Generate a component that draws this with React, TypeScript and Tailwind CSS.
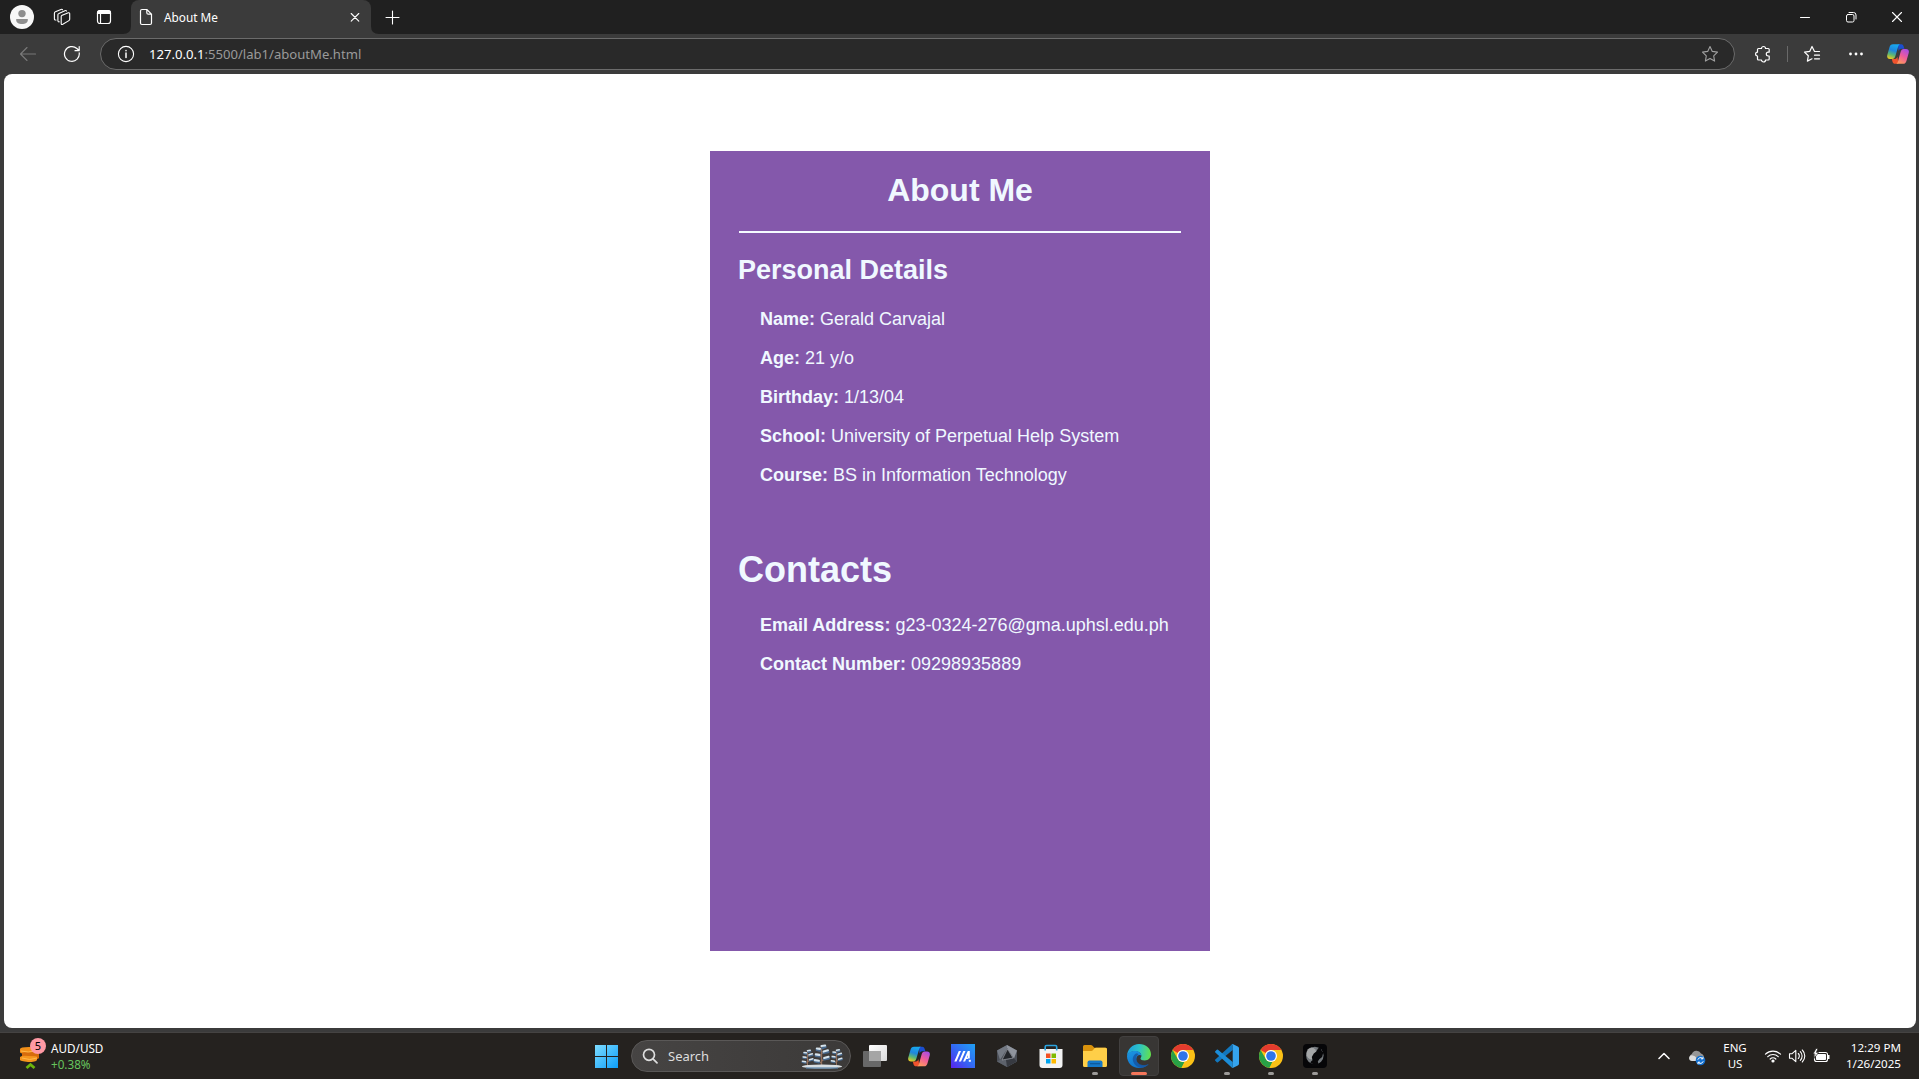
import React from "react";

const stroke = { fill: "none", stroke: "currentColor", strokeLinecap: "round", strokeLinejoin: "round" } as const;

function Copilot({ className, id }: { className: string; id: string }) {
  return (
    <svg viewBox="0 0 22 20" className={className}>
      <defs>
        <linearGradient id={id + "a"} x1="0.5" y1="0" x2="0.2" y2="1">
          <stop offset="0" stopColor="#18a8ee" />
          <stop offset="0.4" stopColor="#1f86dd" />
          <stop offset="0.7" stopColor="#5db873" />
          <stop offset="1" stopColor="#f5cb1b" />
        </linearGradient>
        <linearGradient id={id + "b"} x1="0.8" y1="0" x2="0.3" y2="1">
          <stop offset="0" stopColor="#a64ce8" />
          <stop offset="0.5" stopColor="#ee5b9b" />
          <stop offset="1" stopColor="#ff9a5c" />
        </linearGradient>
      </defs>
      <path d="M11 .2h3.2c1.4 0 2 .8 2.4 2l.8 2.6h-3.2c-1.500 0-2.200 1-2.700 2.500z" fill="#1b4ed0" />
      <path d="M4.800 15H8c1.300 0 2-1 2.400-2.400l1 7.200H8c-1.300 0-2-.7-2.400-1.800z" fill="#f0532d" />
      <path d="M6 .2h7.200c-1.100.3-1.700 1.200-2.100 2.500L8.400 12c-.5 1.900-1.500 3-3.200 3H3C.6 15-.3 13.400.3 11L2.500 3.300C3 1.300 4 .2 6 .2z" fill={`url(#${id}a)`} />
      <path d="M16 19.800H9c1.100-.3 1.600-1.200 2-2.500L13.600 8c.5-1.900 1.500-3.100 3.200-3.100H19c2.400 0 3.300 1.700 2.700 4L19.500 16.700c-.5 2-1.500 3.100-3.500 3.100z" fill={`url(#${id}b)`} />
    </svg>
  );
}

function Chrome() {
  return (
    <svg viewBox="0 0 24 24" className="size-6">
      <circle cx="12" cy="12" r="12" fill="#fbc116" />
      <path d="M12 0a12 12 0 0 1 10.390 6H12a6 6 0 0 0-5.200 3L1.610 6A12 12 0 0 1 12 0z" fill="#e33b2e" />
      <path d="M1.610 6 6.800 15A6 6 0 0 0 12 18l1.500-.2L10.600 23.900A12 12 0 0 1 1.610 6z" fill="#28a146" />
      <path d="M17.200 15 12 24a12 12 0 0 1-1.600-.1L14 17.600z" fill="#fbc116" />
      <circle cx="12" cy="12" r="6" fill="#fff" />
      <circle cx="12" cy="12" r="4.800" fill="#2f74ea" />
    </svg>
  );
}

function Edge() {
  return (
    <svg viewBox="0 0 24 24" className="size-6">
      <defs>
        <linearGradient id="eg1" x1="0" y1="0.3" x2="1" y2="0.4">
          <stop offset="0" stopColor="#1c9ee0" />
          <stop offset="0.5" stopColor="#2cc3c8" />
          <stop offset="1" stopColor="#62e04e" />
        </linearGradient>
        <linearGradient id="eg2" x1="0" y1="0" x2="0.5" y2="1">
          <stop offset="0" stopColor="#1b96e2" />
          <stop offset="1" stopColor="#1173cc" />
        </linearGradient>
      </defs>
      <path d="M0 12C.2 5 5.500 0 12 0c7 0 12 4.700 12 10.300 0 3.700-2.800 6.200-6.200 6.200-2.800 0-4.300-1-4.300-2 0-.6.900-1 .9-2.700 0-2.400-2.400-4.600-6-4.600C4 7.200.8 9.300 0 12z" fill="url(#eg1)" />
      <path d="M0 12c.8-3 4-4.900 8.200-4.900 3.800 0 6.200 2.300 6.200 4.800-.6-1.200-2.700-1.300-4 0-3 4 .5 9.600 6 9.600 2.400 0 3.500-.6 5.300-1.600C19.500 22.500 16 24 12 24 5 24 0 18.500 0 12z" fill="url(#eg2)" />
      <path d="M10 9.200c-2.500.6-4.500 3.500-4.200 6.800.6 4 4.200 7.500 8.500 7.800 3-.4 5.800-1.900 7.400-3.900-6 3-12.600-.6-12.600-5.500 0-2 1.200-3 2.300-3.700-.4-.7-.8-1.200-1.400-1.500z" fill="#15519e" opacity=".75" />
    </svg>
  );
}

function SearchTrees() {
  const tree = (x: number, y: number, s: number) => (
    <g transform={`translate(${x} ${y}) scale(${s})`}>
      <path d="M0 21V2M0 18l-4.500-3M0 16l4.500-3.500M0 12l-4-3M0 9l4-3M0 6l-2.500-3" stroke="#93705c" strokeWidth="1.300" fill="none" />
      <path d="M-6.500 16.200l4 .8M2.500 14.200l4.500-1M-5.500 10.800l3.500.5M2 8l4.500-.8M-4.500 5l3 .8M.8 3.500l3-1.200" stroke="#48698d" strokeWidth="2.400" strokeLinecap="round" />
      <path d="M-6.500 15l4 .6M2.500 13l4.300-1.200M-5.500 9.500l3.500.5M2 6.800l4.200-1.200M-4.500 3.800l3 .4M0 1.500l3.500-.5" stroke="#d5e3ec" strokeWidth="2" strokeLinecap="round" />
    </g>
  );
  return (
    <svg viewBox="0 0 42 26" className="h-[26px] w-[42px]">
      {tree(6.500, 6.500, 0.78)}
      {tree(35.500, 6, 0.78)}
      {tree(20.500, 1.500, 1.040)}
      <ellipse cx="21" cy="23.500" rx="20" ry="2" fill="#d8dee2" />
      <path d="M5 25h32" stroke="#5a83aa" strokeWidth="1.200" />
    </svg>
  );
}

function TitleBar() {
  return (
    <div className="flex h-[34px] items-center bg-[#202020] text-white">
      <svg viewBox="0 0 24 24" className="ml-[10px] size-6">
        <circle cx="12" cy="12" r="12" fill="#f7f7f7" />
        <circle cx="12" cy="8.600" r="3.700" fill="#8e8e8e" />
        <path d="M6.200 14h11.600v1.200c0 2.300-2.500 3.900-5.800 3.900s-5.800-1.600-5.800-3.900z" fill="#8e8e8e" />
      </svg>
      <svg viewBox="0 0 18 18" className="ml-[19px] size-[18px]" {...stroke} strokeWidth="1.100">
        <path d="M9.200 7.200 15.300 4.800q1.400-.4 1.400 1v5.500q0 .9-.8 1.300l-6.100 3.700q-1.600.8-1.600-.8V8.600q0-1 1-1.400z" />
        <path d="M6.300 13.800q-1.400.3-1.400-1.200V6.800q0-1 1-1.400l6-2.700q1.200-.4 1.600.4" />
        <path d="M3 12q-1.600.3-1.600-1.200V5.200q0-1 1-1.400l5.600-2.400q1.200-.4 1.500.3" />
      </svg>
      <svg viewBox="0 0 16 16" className="ml-[25px] size-4" {...stroke} strokeWidth="1.200">
        <rect x="1.500" y="1.500" width="13" height="13" rx="2.500" />
        <path d="M1.500 4.500V4A2.500 2.500 0 0 1 4 1.500h8A2.500 2.500 0 0 1 14.500 4v.5z" fill="currentColor" />
        <path d="M4.500 5v9.500" />
      </svg>
      <div className="relative ml-[19px] flex h-[34px] w-[240px] items-center rounded-t-[8px] bg-[#3b3b3b]">
        <svg viewBox="0 0 256 8" className="absolute bottom-0 left-[-8px] h-2 w-[256px]" fill="#3b3b3b">
          <path d="M0 8h8V0q0 8-8 8zM256 8h-8V0q0 8 8 8z" />
        </svg>
        <svg viewBox="0 0 14 18" className="ml-[8px] h-[18px] w-[14px]" {...stroke} strokeWidth="1.200">
          <path d="M3 1.500h4.800l4.700 4.700v8.800q0 1.500-1.500 1.500H3q-1.500 0-1.500-1.500V3Q1.500 1.500 3 1.500zM7.800 1.500v3.200q0 1.500 1.500 1.500h3.200" />
        </svg>
        <span className="ml-[11px] w-[184px] pb-px text-[11.800px] leading-4">About Me</span>
        <svg viewBox="0 0 10 10" className="ml-[2px] size-[10px] shrink-0" {...stroke} strokeWidth="1.100">
          <path d="M1.200 1.500l7.600 7.600M8.800 1.500l-7.600 7.600" />
        </svg>
      </div>
      <svg viewBox="0 0 15 15" className="ml-[14px] size-[15px]" {...stroke} strokeWidth="1.100">
        <path d="M7.500 1v13M1 7.500h13" />
      </svg>
      <div className="mr-[16px] ml-auto flex items-center gap-[34px]">
        <svg viewBox="0 0 12 12" className="size-3" {...stroke} strokeWidth="1">
          <path d="M1.500 6.500h9" />
        </svg>
        <svg viewBox="0 0 12 12" className="size-3" {...stroke} strokeWidth="1">
          <rect x="1.500" y="3.500" width="7.500" height="7.500" rx="1.500" />
          <path d="M4 1.500h4.500q2.500 0 2.500 2.500v4" />
        </svg>
        <svg viewBox="0 0 12 12" className="size-3" {...stroke} strokeWidth="1.100">
          <path d="M1.500 1.500l9 9M10.500 1.500l-9 9" />
        </svg>
      </div>
    </div>
  );
}

function Toolbar() {
  return (
    <div className="flex h-[40px] items-center bg-[#3b3b3b] text-white">
      <svg viewBox="0 0 18 18" className="ml-[19px] size-[18px] text-[#797979]" {...stroke} strokeWidth="1.100">
        <path d="M16.500 9h-15M8 2.500 1.500 9 8 15.500" />
      </svg>
      <svg viewBox="0 0 18 18" className="ml-[26px] size-[18px]" {...stroke} strokeWidth="1.200">
        <path d="M16.200 7.800A7.400 7.400 0 1 1 13.900 3.500L16 5.500M16.200 1.500v4.200H12" />
      </svg>
      <div className="ml-[19px] flex h-8 w-[1635px] items-center rounded-full border border-[#6b6b6b] bg-[#292929]">
        <svg viewBox="0 0 18 18" className="ml-[16px] size-[18px]" {...stroke} strokeWidth="1.100">
          <circle cx="9" cy="9" r="7.600" />
          <path d="M9 8v4.500M9 5.500v.2" strokeWidth="1.500" />
        </svg>
        <span className="ml-[14px] text-[13.100px] leading-5 text-[#9a9a9a]">
          <span className="text-white">127.0.0.1</span>:5500/lab1/aboutMe.html
        </span>
        <svg viewBox="0 0 18 18" className="mr-[15px] ml-auto size-[18px] text-[#a0a0a0]" {...stroke} strokeWidth="1.100">
          <path d="M9 1.500l2.300 4.900 5.200.7-3.800 3.700.9 5.300L9 13.600l-4.600 2.500.9-5.300L1.500 7.100l5.200-.7z" />
        </svg>
      </div>
      <svg viewBox="0 0 18 18" className="ml-[19px] size-[18px]" {...stroke} strokeWidth="1.200">
        <path d="M4.500 3.500h3a2 2 0 0 1 4 0h2.700q1 0 1 1v2.700h-1a1.900 1.900 0 0 0 0 3.800h1v3q0 1-1 1h-2.700a2 2 0 0 1-4 0h-3q-1 0-1-1v-3a1.900 1.900 0 0 1 0-3.800V4.500q0-1 1-1z" />
      </svg>
      <div className="ml-[15px] h-4 w-px bg-[#696969]" />
      <svg viewBox="0 0 18 18" className="ml-[15px] size-[18px]" {...stroke} strokeWidth="1.200">
        <path d="M16.500 6.500h-5L9 1.500 6.700 6.400l-5.200.7 3.800 3.700-.9 5.300L9 13.800M11.500 10.200h5M11.500 13.800h5" />
      </svg>
      <svg viewBox="0 0 16 4" className="ml-[27px] h-1 w-4" fill="currentColor">
        <circle cx="2.500" cy="2" r="1.400" />
        <circle cx="8" cy="2" r="1.400" />
        <circle cx="13.500" cy="2" r="1.400" />
      </svg>
      <Copilot id="tb" className="ml-[23px] h-5 w-[22px]" />
    </div>
  );
}

function Row({ label, value }: { label: string; value: string }) {
  return (
    <p>
      <b>{label}:</b> {value}
    </p>
  );
}

function AboutCard() {
  return (
    <div className="h-[800px] w-[500px] bg-[#8458ab] px-[28px] pt-[21px] font-['Liberation_Sans',Arial,sans-serif] text-[#f0f8ff]">
      <h1 className="text-center text-[32px] leading-[36px] font-bold">About Me</h1>
      <div className="mx-px mt-[23px] h-[2px] bg-[#f5faff]" />
      <h2 className="mt-[21px] text-[27px] leading-[32px] font-bold">Personal Details</h2>
      <div className="mt-[23px] ml-[22px] flex flex-col gap-[18px] text-[18px] leading-[21px] whitespace-nowrap">
        <Row label="Name" value="Gerald Carvajal" />
        <Row label="Age" value="21 y/o" />
        <Row label="Birthday" value="1/13/04" />
        <Row label="School" value="University of Perpetual Help System" />
        <Row label="Course" value="BS in Information Technology" />
      </div>
      <h2 className="mt-[63px] text-[36px] leading-[42px] font-bold">Contacts</h2>
      <div className="mt-[24px] ml-[22px] flex flex-col gap-[18px] text-[18px] leading-[21px] whitespace-nowrap">
        <Row label="Email Address" value="g23-0324-276@gma.uphsl.edu.ph" />
        <Row label="Contact Number" value="09298935889" />
      </div>
    </div>
  );
}

function TaskButton({ children, running, active }: { children: React.ReactNode; running?: boolean; active?: boolean }) {
  return (
    <div className="relative flex h-[46px] w-11 items-center justify-center">
      {active && <div className="absolute inset-x-[2px] inset-y-[3px] rounded-[4px] border border-[#42403f] bg-[#383634]" />}
      <div className="relative">{children}</div>
      {running && <div className="absolute bottom-[4px] h-[3px] w-[6px] rounded-full bg-[#9c9a98]" />}
      {active && <div className="absolute bottom-[4px] h-[3px] w-4 rounded-full bg-[#f4765a]" />}
    </div>
  );
}

function Taskbar() {
  return (
    <div className="relative flex h-[46px] items-center bg-[#25221f] text-white">
      <div className="relative ml-[18px] h-[30px] w-[30px]">
        <svg viewBox="0 0 30 30" className="size-[30px]">
          <path d="M2 8q0-2 9-2t9 2v3q0 2-9 2t-9-2z" fill="#f39019" />
          <path d="M4 12q0-1 9-1t8 2v4q-1 2-9 1t-8-2z" fill="#d76c0c" />
          <path d="M2 16q2-2 9-1 8 0 8 1v3q-1 2-9 2-8-1-8-2z" fill="#f5951d" />
          <path d="M3 10q7 2 15 0M4 17q8 3 15 0" stroke="#ffb94b" strokeWidth="1" fill="none" />
          <path d="M8.500 27l4-3.500 4 3.500" fill="none" stroke="#6db50d" strokeWidth="2.800" />
        </svg>
        <div className="absolute top-[-3px] left-[12px] flex size-4 items-center justify-center rounded-full bg-[#ff99a4] text-[11px] leading-4 text-black">5</div>
      </div>
      <div className="ml-[3px] pb-px text-[11.700px] leading-4">
        <div>AUD/USD</div>
        <div className="text-[#66c45e]">+0.38%</div>
      </div>
      <div className="absolute left-[584px] flex h-[46px] items-center">
        <div className="flex w-11 justify-center">
          <svg viewBox="0 0 23 23" className="size-[23px]">
            <defs>
              <linearGradient id="win" x1="0" y1="0" x2="1" y2="1">
                <stop offset="0" stopColor="#7ddcff" />
                <stop offset="1" stopColor="#0c9df8" />
              </linearGradient>
            </defs>
            <path d="M0 0h11v11H0zM12 0h11v11H12zM0 12h11v11H0zM12 12h11v11H12z" fill="url(#win)" />
          </svg>
        </div>
        <div className="ml-[3px] flex h-8 w-[220px] items-center rounded-full border border-[#5a5857] bg-linear-to-r from-[#464443] to-[#3c3a39]">
          <svg viewBox="0 0 16 16" className="ml-[10px] size-4 text-[#dedede]" {...stroke} strokeWidth="1.700">
            <circle cx="7" cy="6.800" r="5.500" />
            <path d="M11 10.800l4 4" />
          </svg>
          <span className="ml-[10px] text-[13px] leading-5 text-[#dddddd]">Search</span>
          <div className="mr-[7px] ml-auto">
            <SearchTrees />
          </div>
        </div>
        <div className="ml-[2px] flex">
          <TaskButton>
            <svg viewBox="0 0 24 22" className="h-[22px] w-6">
              <defs>
                <linearGradient id="tv" x1="0" y1="0" x2="1" y2="1">
                  <stop offset="0" stopColor="#fff" />
                  <stop offset="1" stopColor="#dadada" />
                </linearGradient>
              </defs>
              <rect y="6" width="18" height="16" rx="1" fill="#686868" />
              <rect x="6" width="18" height="16" rx="1" fill="url(#tv)" />
              <path d="M6 6h12v10H6z" fill="#a5a5a5" />
            </svg>
          </TaskButton>
          <TaskButton>
            <Copilot id="task" className="h-[21px] w-[22px]" />
          </TaskButton>
          <TaskButton>
            <svg viewBox="0 0 24 24" className="size-6">
              <defs>
                <linearGradient id="ma" x1="0" y1="1" x2="1" y2="0">
                  <stop offset="0" stopColor="#5a22ee" />
                  <stop offset="0.45" stopColor="#3564f4" />
                  <stop offset="1" stopColor="#1fa2f4" />
                </linearGradient>
              </defs>
              <path d="M0 0h24v24H0z" fill="url(#ma)" />
              <path d="M3.300 17.500 7.800 7h2.200L5.500 17.500zM7.800 17.500 12.300 7h2.200L10 17.500zM12 17.500 16.800 7h2v7.500h-1.900v-3.200l-1 2.200h1v1.500h-1.700l-1.100 2.500z" fill="#fff" />
              <path d="M17.800 15.800h2v2h-2z" fill="#fff" />
            </svg>
          </TaskButton>
          <TaskButton>
            <svg viewBox="0 0 22 24" className="h-6 w-[22px]">
              <path d="M11 1l10 5.500v11L11 23 1 17.500v-11z" fill="#4b4f57" />
              <path d="M11 1l10 5.500-3 8L11 4z" fill="#90959e" />
              <path d="M11 1v4L4 16l-3-9.500z" fill="#737983" />
              <path d="M1 17.500 4 16l14-1.500 3 3L11 23z" fill="#5d626b" />
              <path d="M11 23l-1-7 8-1.500 3 3z" fill="#373a41" />
              <path d="M11.500 5 17 14 6 16z" fill="#22252a" stroke="#a6aab1" strokeWidth=".6" />
            </svg>
          </TaskButton>
          <TaskButton>
            <svg viewBox="0 0 24 24" className="size-6">
              <path d="M6.200 7V2.800Q6.200 1.500 7.500 1.500h8.800q1.400 0 1.400 1.300V7" fill="none" stroke="#2ba4df" strokeWidth="1.600" />
              <path d="M.5 5h23v16q0 3-3 3h-17q-3 0-3-3z" fill="#f3f3f3" />
              <path d="M6.200 4.800V6.500M17.700 4.800V6.500" stroke="#2ba4df" strokeWidth="1.600" />
              <path d="M7 9.500h4.500V14H7z" fill="#f25022" />
              <path d="M12.500 9.500H17V14h-4.500z" fill="#7fba00" />
              <path d="M7 15h4.500v4.500H7z" fill="#00a4ef" />
              <path d="M12.500 15H17v4.500h-4.500z" fill="#ffb900" />
            </svg>
          </TaskButton>
          <TaskButton running>
            <svg viewBox="0 0 24 22" className="h-[22px] w-6">
              <path d="M0 1.500Q0 0 1.500 0h6.300q1 0 1.700.8l1.800 1.900H22.500q1.500 0 1.500 1.500V12H0z" fill="#d9920c" />
              <path d="M0 6h8.200q1 0 1.700-.8L11.500 3.300q.6-.6 1.500-.6h9.500q1.500 0 1.500 1.500v16.300q0 1.500-1.500 1.500h-21Q0 22 0 20.500z" fill="#ffcf48" />
              <path d="M4.500 22v-4.500Q4.500 15.500 6.500 15.500h11q2 0 2 2V22z" fill="#1478c8" />
              <path d="M7 18.700h10" stroke="#0e5797" strokeWidth="1.200" />
            </svg>
          </TaskButton>
          <TaskButton active>
            <Edge />
          </TaskButton>
          <TaskButton>
            <Chrome />
          </TaskButton>
          <TaskButton running>
            <svg viewBox="0 0 24 24" className="size-6">
              <path d="M17.700 0v6L3 18.200q-.7.500-1.200 0L.3 16.800q-.6-.6 0-1.200L17 .3z" fill="#1277bd" />
              <path d="M17.700 24v-6L3 5.800q-.7-.5-1.200 0L.3 7.200q-.6.600 0 1.200L17 23.700z" fill="#1c8dd8" />
              <path d="M17.700.1 22.800 2.500Q24 3 24 4.300v15.400q0 1.300-1.200 1.800l-5.100 2.400q-.8.300-1.400-.3 1.400.8 1.400-.7V1.100q0-1.500-1.400-.7.600-.6 1.400-.3z" fill="#35a4ee" />
            </svg>
          </TaskButton>
          <TaskButton running>
            <Chrome />
          </TaskButton>
          <TaskButton running>
            <svg viewBox="0 0 24 24" className="size-6">
              <rect width="24" height="24" rx="4" fill="#060608" />
              <circle cx="11.800" cy="11.500" r="8.800" fill="#74797d" />
              <ellipse cx="8.500" cy="9.500" rx="5" ry="6" fill="#b4b6b6" opacity=".75" />
              <path d="M15 4.500q1.500-1.500 2.800-.3l.7 2.300 1.800 2-1.200 4.500-2.800 2.300-1.500 2.200 1.500 4.500H8l1.500-2.500-2.500.5 1-2.500 1.500-1.300-.7-3.200 2-3.500 2.500-2z" fill="#08080a" />
            </svg>
          </TaskButton>
        </div>
      </div>
      <div className="mr-[18px] ml-auto flex items-center">
        <svg viewBox="0 0 12 8" className="h-2 w-3" {...stroke} strokeWidth="1.500">
          <path d="M1 6.500 6 1.500l5 5" />
        </svg>
        <svg viewBox="0 0 18 16" className="mt-[3px] ml-[18px] h-4 w-[18px]">
          <path d="M4 10.500a3.500 3.500 0 0 1-.2-6.500 5 5 0 0 1 9.200-.5 3.500 3.500 0 0 1 2.500 5L11 11z" fill="#969696" />
          <path d="M1 8a3 3 0 0 1 4.500-2.300Q8.500 6 9 11H4Q1.200 11 1 8z" fill="#dcdcdc" />
          <circle cx="12.500" cy="10.500" r="4.800" fill="#1370cf" />
          <path d="M9.800 9.700a3 3 0 0 1 5-1.200M15.200 11.300a3 3 0 0 1-5 1.200M15 6.800v2h-2M10 14.200v-2h2" stroke="#fff" strokeWidth="1" fill="none" />
        </svg>
        <div className="ml-[17px] w-6 text-center text-[11.500px] leading-4">
          <div>ENG</div>
          <div>US</div>
        </div>
        <svg viewBox="0 0 18 14" className="ml-[17px] h-[14px] w-[18px]" {...stroke} strokeWidth="1.200">
          <path d="M1.500 5.200a10.600 10.600 0 0 1 15 0M3.800 7.700a7.300 7.300 0 0 1 10.400 0M6.200 10a4 4 0 0 1 5.600 0" />
          <circle cx="9" cy="12" r="1" fill="currentColor" />
        </svg>
        <svg viewBox="0 0 18 16" className="ml-[6px] h-4 w-[18px]" {...stroke} strokeWidth="1.100">
          <path d="M1.500 5.800h2.300L7.800 2.300v11.400l-4-3.500H1.500zM10.300 5.500a3.500 3.500 0 0 1 0 5M12.300 3.700a6 6 0 0 1 0 8.600M14.300 2a8.500 8.500 0 0 1 0 12" />
        </svg>
        <svg viewBox="0 0 18 16" className="mb-px ml-[6px] h-4 w-[18px]" fill="currentColor">
          <rect x="2.500" y="4.500" width="13" height="9" rx="2" fill="none" stroke="currentColor" strokeWidth="1.100" />
          <rect x="4" y="6" width="10" height="6" rx=".8" />
          <path d="M16 7h1.500v4H16z" />
          <path d="M4 .5 1 6h2l-1 4.500L6.500 4.500H4.300L6 .5z" stroke="#25221f" strokeWidth=".7" />
        </svg>
        <div className="ml-[14px] w-[57px] pb-px text-[11.600px] leading-4 whitespace-nowrap">
          <div className="flex justify-end">12:29 PM</div>
          <div className="flex justify-end">1/26/2025</div>
        </div>
      </div>
    </div>
  );
}

export default function App() {
  return (
    <div className="flex h-screen flex-col overflow-hidden bg-[#3b3b3b] font-['Noto_Sans','Open_Sans',sans-serif]">
      <TitleBar />
      <Toolbar />
      <main className="mr-[3px] ml-1 flex h-[954px] justify-center rounded-[8px] bg-white pt-[77px]">
        <AboutCard />
      </main>
      <div className="h-[5px] shrink-0 border-b border-[#454342]" />
      <Taskbar />
    </div>
  );
}
